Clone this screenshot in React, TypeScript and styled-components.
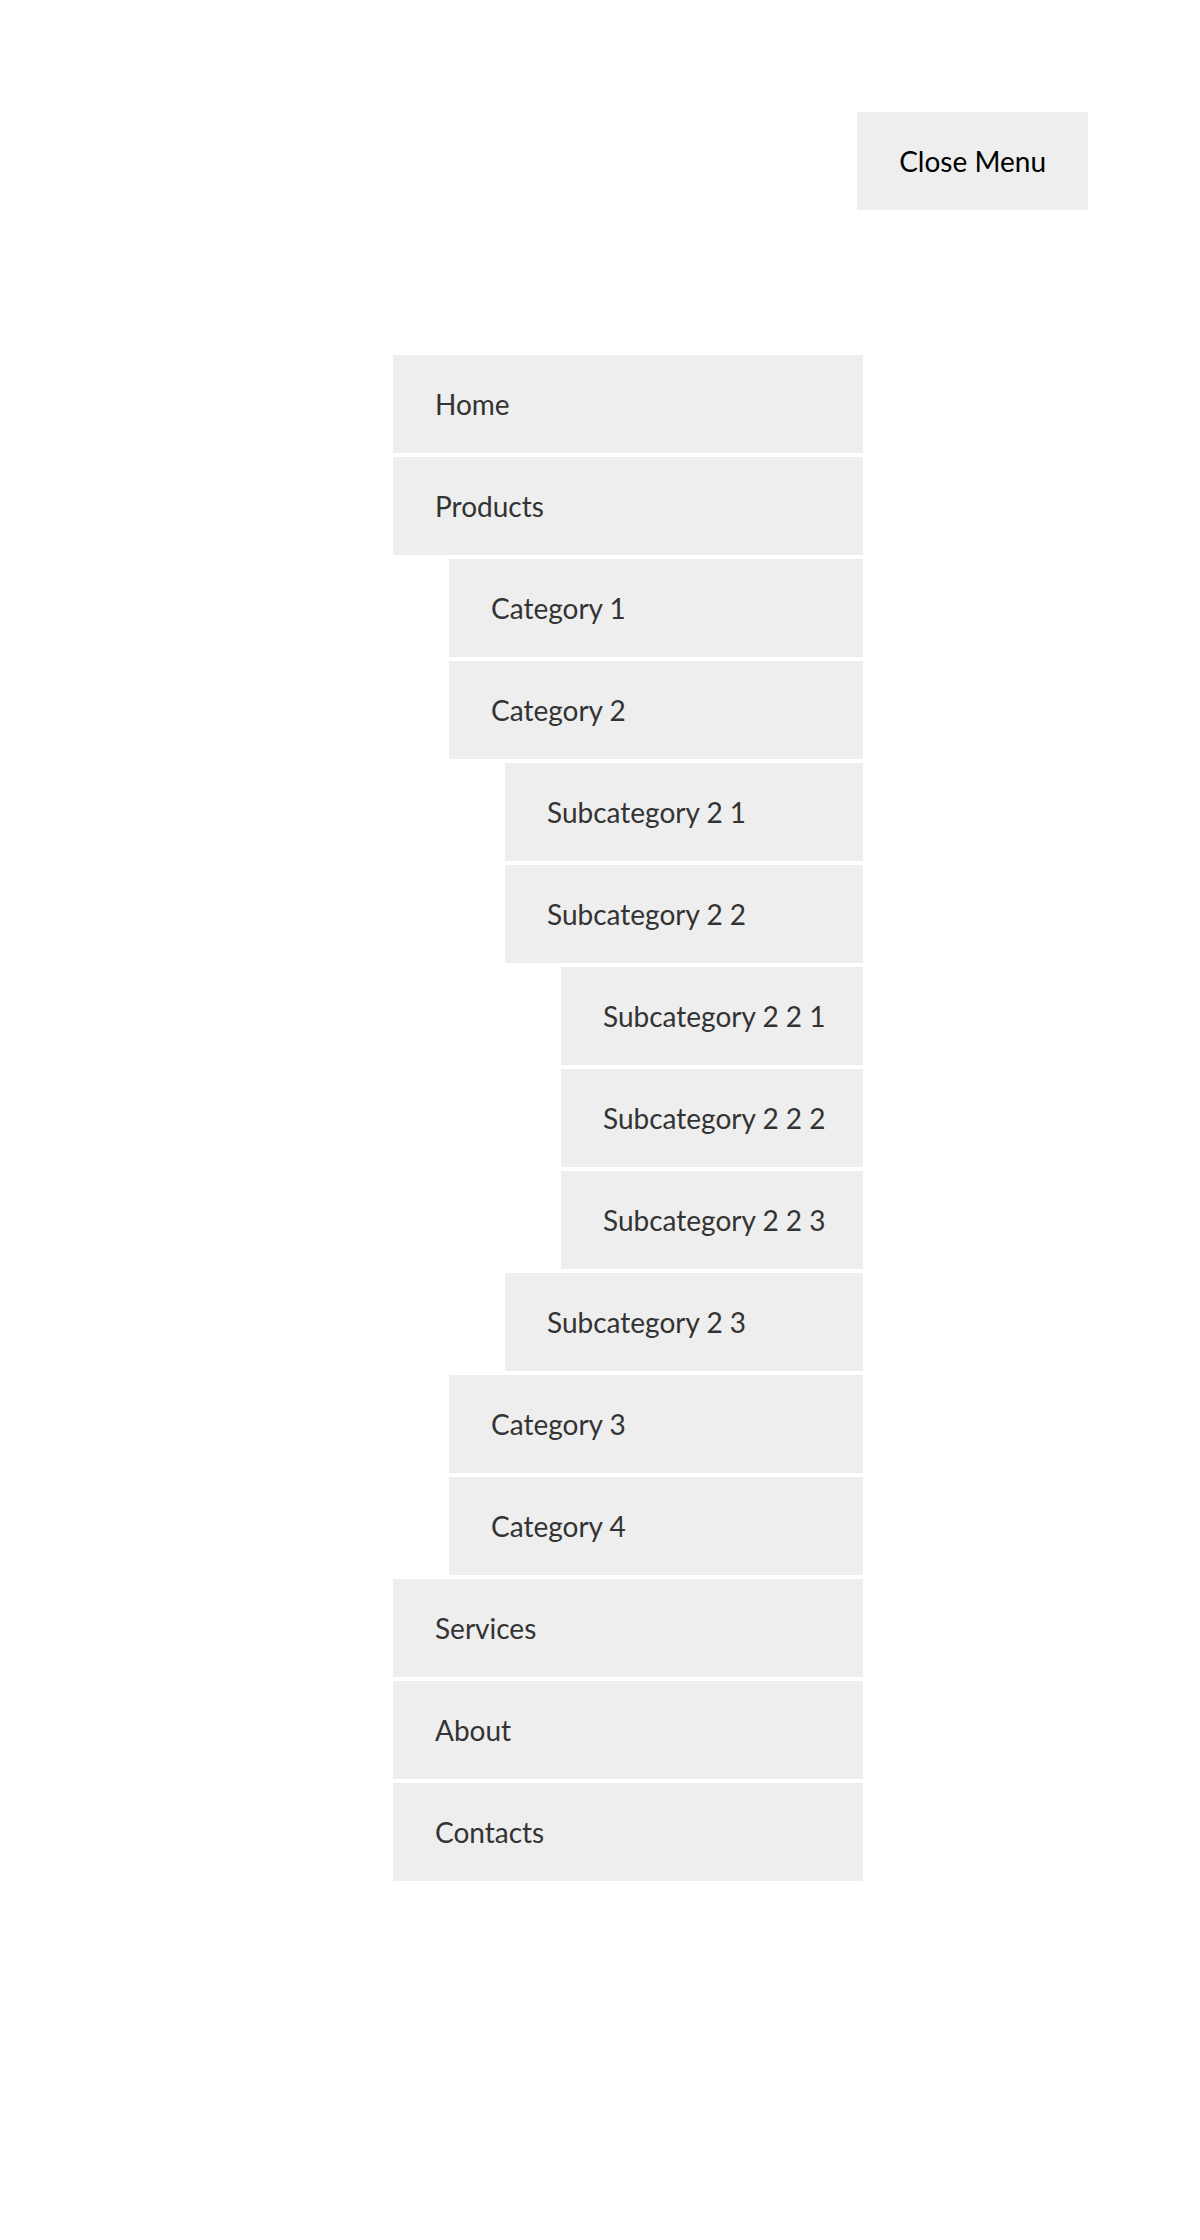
import React from "react";
import styled, { createGlobalStyle } from "styled-components";

const GlobalStyle = createGlobalStyle`
  html, body { margin: 0; padding: 0; background: #fff; }
  body { font-family: Lato, "Open Sans", "Liberation Sans", sans-serif; }
  * { box-sizing: border-box; }
`;

const Page = styled.div`
  width: 1200px;
  min-height: 2240px;
  padding-top: 112px;
  font-size: 28px;
  line-height: 1.5;
`;

const TopBar = styled.div`
  display: flex;
  justify-content: flex-end;
  padding-right: 112px;
`;

const CloseButton = styled.button`
  font: inherit;
  color: #000;
  background: #eee;
  border: none;
  padding: 1em 1.5em;
  height: 98px;
  cursor: pointer;
`;

const Nav = styled.nav`
  margin: 145px 0 0 393px;
  width: 470px;
`;

const List = styled.ul<{ $nested?: boolean }>`
  list-style: none;
  margin: ${(p) => (p.$nested ? "4px 0 0 0" : "0")};
  padding: 0 0 0 ${(p) => (p.$nested ? "56px" : "0")};
  display: flex;
  flex-direction: column;
  gap: 4px;
`;

const Item = styled.li`
  margin: 0;
`;

const Link = styled.a`
  display: block;
  height: 98px;
  padding: 1em 1.5em;
  background: #eee;
  color: #333;
  text-decoration: none;
  white-space: nowrap;
`;

type Node = { label: string; children?: Node[] };

const menu: Node[] = [
  { label: "Home" },
  {
    label: "Products",
    children: [
      { label: "Category 1" },
      {
        label: "Category 2",
        children: [
          { label: "Subcategory 2 1" },
          {
            label: "Subcategory 2 2",
            children: [
              { label: "Subcategory 2 2 1" },
              { label: "Subcategory 2 2 2" },
              { label: "Subcategory 2 2 3" },
            ],
          },
          { label: "Subcategory 2 3" },
        ],
      },
      { label: "Category 3" },
      { label: "Category 4" },
    ],
  },
  { label: "Services" },
  { label: "About" },
  { label: "Contacts" },
];

const MenuList: React.FC<{ items: Node[]; nested?: boolean }> = ({ items, nested }) => (
  <List $nested={nested}>
    {items.map((n) => (
      <Item key={n.label}>
        <Link href="#">{n.label}</Link>
        {n.children && <MenuList items={n.children} nested />}
      </Item>
    ))}
  </List>
);

export default function App() {
  return (
    <>
      <GlobalStyle />
      <Page>
        <TopBar>
          <CloseButton>Close Menu</CloseButton>
        </TopBar>
        <Nav>
          <MenuList items={menu} />
        </Nav>
      </Page>
    </>
  );
}
